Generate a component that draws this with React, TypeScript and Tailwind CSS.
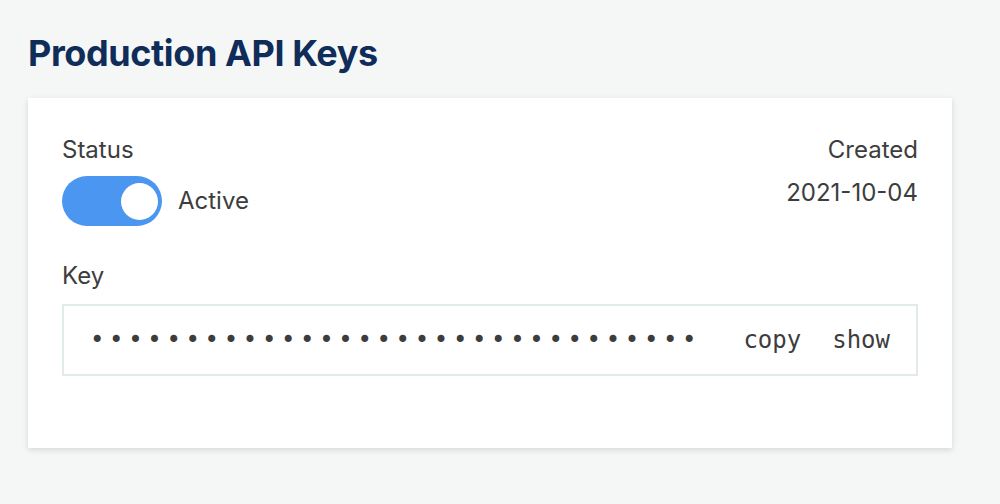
import React from "react";

export default function App() {
  const dots = "•".repeat(32);
  return (
    <div className="w-[1000px] h-[504px] bg-[#f5f7f7] px-[28px] pt-[31px] font-['Inter',sans-serif] text-[#3d3d3d]">
      <h1 className="text-[36px] leading-[44px] font-bold text-[#102c59] tracking-[-0.4px]">Production API Keys</h1>
      <div className="mt-[23px] w-[924px] h-[350px] bg-white shadow-[0_2px_6px_rgba(0,0,0,0.13)] px-[34px] pt-[38px]">
        <div className="flex justify-between">
          <div className="flex flex-col">
            <span className="text-[24px] leading-[28px]">Status</span>
            <div className="flex items-center mt-[12px] gap-[16px]">
              <div className="w-[100px] h-[50px] rounded-full bg-[#4a96f0] flex items-center justify-end pr-[4px]">
                <div className="w-[37px] h-[37px] rounded-full bg-white" />
              </div>
              <span className="text-[24px]">Active</span>
            </div>
          </div>
          <div className="flex flex-col items-end">
            <span className="text-[24px] leading-[28px]">Created</span>
            <span className="text-[24px] leading-[28px] mt-[15px]">2021-10-04</span>
          </div>
        </div>
        <div className="mt-[36px] text-[24px] leading-[28px]">Key</div>
        <div className="mt-[14px] h-[72px] border-2 border-[#e3eaec] flex items-center pl-[26px] pr-[26px] font-['DejaVu_Sans_Mono',monospace] text-[24px]">
          <span className="tracking-[4.65px] flex-1">{dots}</span>
          <span>copy</span>
          <span className="ml-[31px]">show</span>
        </div>
      </div>
    </div>
  );
}
